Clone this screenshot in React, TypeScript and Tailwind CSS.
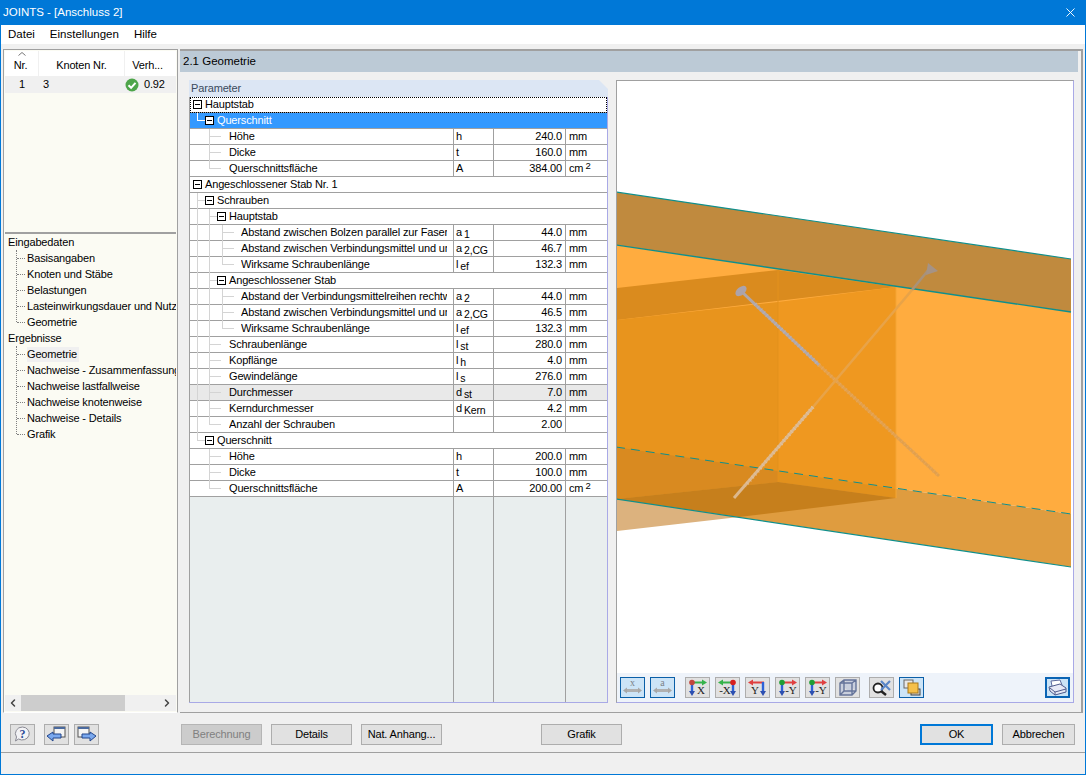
import type { ReactNode } from "react";
import { ChevronLeft, ChevronRight, X } from "lucide-react";

type Row = {
  label: string;
  depth: number;
  // tree guides, as x offsets in the row; the last one stops halfway when `end` is set
  guides: number[];
  end?: boolean;
  sym?: string;
  sub?: string;
  val?: string;
  unit?: string;
  sup?: boolean;
  group?: boolean;
  selected?: boolean;
  focused?: boolean;
  grey?: boolean;
};

const rows: Row[] = [
  { label: "Hauptstab", depth: 0, guides: [], group: true, focused: true },
  { label: "Querschnitt", depth: 1, guides: [7], end: true, group: true, selected: true },
  { label: "Höhe", depth: 2, guides: [19], sym: "h", val: "240.0", unit: "mm" },
  { label: "Dicke", depth: 2, guides: [19], sym: "t", val: "160.0", unit: "mm" },
  { label: "Querschnittsfläche", depth: 2, guides: [19], end: true, sym: "A", val: "384.00", unit: "cm", sup: true },
  { label: "Angeschlossener Stab Nr. 1", depth: 0, guides: [], group: true },
  { label: "Schrauben", depth: 1, guides: [7], group: true },
  { label: "Hauptstab", depth: 2, guides: [7, 19], group: true },
  { label: "Abstand zwischen Bolzen parallel zur Faser", depth: 3, guides: [7, 19, 32], sym: "a", sub: "1", val: "44.0", unit: "mm" },
  { label: "Abstand zwischen Verbindungsmittel und umlaufendem", depth: 3, guides: [7, 19, 32], sym: "a", sub: "2,CG", val: "46.7", unit: "mm" },
  { label: "Wirksame Schraubenlänge", depth: 3, guides: [7, 19, 32], end: true, sym: "l", sub: "ef", val: "132.3", unit: "mm" },
  { label: "Angeschlossener Stab", depth: 2, guides: [7, 19], group: true },
  { label: "Abstand der Verbindungsmittelreihen rechtwinklig", depth: 3, guides: [7, 19, 32], sym: "a", sub: "2", val: "44.0", unit: "mm" },
  { label: "Abstand zwischen Verbindungsmittel und umlaufendem", depth: 3, guides: [7, 19, 32], sym: "a", sub: "2,CG", val: "46.5", unit: "mm" },
  { label: "Wirksame Schraubenlänge", depth: 3, guides: [7, 19, 32], end: true, sym: "l", sub: "ef", val: "132.3", unit: "mm" },
  { label: "Schraubenlänge", depth: 2, guides: [7, 19], sym: "l", sub: "st", val: "280.0", unit: "mm" },
  { label: "Kopflänge", depth: 2, guides: [7, 19], sym: "l", sub: "h", val: "4.0", unit: "mm" },
  { label: "Gewindelänge", depth: 2, guides: [7, 19], sym: "l", sub: "s", val: "276.0", unit: "mm" },
  { label: "Durchmesser", depth: 2, guides: [7, 19], sym: "d", sub: "st", val: "7.0", unit: "mm", grey: true },
  { label: "Kerndurchmesser", depth: 2, guides: [7, 19], sym: "d", sub: "Kern", val: "4.2", unit: "mm" },
  { label: "Anzahl der Schrauben", depth: 2, guides: [7, 19], end: true, sym: "", val: "2.00", unit: "" },
  { label: "Querschnitt", depth: 1, guides: [7], end: true, group: true },
  { label: "Höhe", depth: 2, guides: [19], sym: "h", val: "200.0", unit: "mm" },
  { label: "Dicke", depth: 2, guides: [19], sym: "t", val: "100.0", unit: "mm" },
  { label: "Querschnittsfläche", depth: 2, guides: [19], end: true, sym: "A", val: "200.00", unit: "cm", sup: true },
];

const inputItems = ["Basisangaben", "Knoten und Stäbe", "Belastungen", "Lasteinwirkungsdauer und Nutzungsklasse", "Geometrie"];
const resultItems = ["Geometrie", "Nachweise - Zusammenfassung", "Nachweise lastfallweise", "Nachweise knotenweise", "Nachweise - Details", "Grafik"];

function MinusBox() {
  return (
    <span className="relative z-10 flex h-[9px] w-[9px] shrink-0 items-center justify-center border border-black bg-white">
      <span className="h-px w-[5px] bg-black" />
    </span>
  );
}

function Guides({ row }: { row: Row }) {
  const color = row.selected ? "bg-white" : "bg-[#d4d4d4]";
  const last = row.guides.length - 1;
  const branch = row.guides[last];
  return (
    <>
      {row.guides.map((x, i) => (
        <span
          key={x}
          className={`absolute top-0 w-px ${color} ${row.end && i === last ? "h-[8px]" : "h-4"}`}
          style={{ left: x }}
        />
      ))}
      {last >= 0 && (
        <span
          className={`absolute top-[7px] h-px ${color}`}
          style={{ left: branch, width: row.group ? 8 : 12 }}
        />
      )}
    </>
  );
}

function ParamRow({ row }: { row: Row }) {
  const tone = row.selected ? "bg-[#3399ff] text-white" : row.grey ? "bg-[#e9e9e9]" : "bg-white";
  if (row.group) {
    const boxLeft = [3, 15, 27][row.depth];
    return (
      <div className={`relative flex h-4 items-center border-b border-[#a0a0a0] ${tone} ${row.focused ? "outline-1 -outline-offset-1 outline-dotted outline-black" : ""}`}>
        <Guides row={row} />
        <div className="flex items-center gap-[3px]" style={{ paddingLeft: boxLeft }}>
          <MinusBox />
          <span className="whitespace-nowrap">{row.label}</span>
        </div>
      </div>
    );
  }
  return (
    <div className={`grid h-4 grid-cols-[264px_40px_72px_41px] border-b border-[#a0a0a0] ${tone}`}>
      <div className="relative border-r border-[#a0a0a0] pr-[6px]" style={{ paddingLeft: row.depth === 2 ? 39 : 51 }}>
        <Guides row={row} />
        <div className="overflow-hidden whitespace-nowrap">{row.label}</div>
      </div>
      <div className="border-r border-[#a0a0a0] pl-[2px] whitespace-nowrap">
        {row.sym}
        {row.sub && <span className="relative top-[2px] ml-[2px] text-[10.5px]">{row.sub}</span>}
      </div>
      <div className="border-r border-[#a0a0a0] pr-[3px] text-right">{row.val}</div>
      <div className="pl-[3px] whitespace-nowrap">
        {row.unit}
        {row.sup && <span className="relative -top-[3px] ml-[2px] text-[9.5px]">2</span>}
      </div>
    </div>
  );
}

function NavTree({ title, items, active }: { title: string; items: string[]; active?: string }) {
  return (
    <div>
      <div className="flex h-4 items-center pl-[3px]">{title}</div>
      <div className="relative">
        <span className="absolute top-0 bottom-2 left-[11px] border-l border-dotted border-[#808080]" />
        {items.map((item) => (
          <div key={item} className="relative flex h-4 items-center pl-[22px] whitespace-nowrap">
            <span className="absolute top-[8px] left-[12px] w-[8px] border-t border-dotted border-[#808080]" />
            <span className={item === active ? "bg-[#f0f0f0] pr-[2px]" : ""}>{item}</span>
          </div>
        ))}
      </div>
    </div>
  );
}

function IconBtn({ on, children }: { on?: boolean; children: ReactNode }) {
  return (
    <button className={`flex h-[21px] w-[25px] items-center justify-center border ${on ? "border-[#0a5fa8] bg-[#cce4f7]" : "border-[#adadad] bg-[#e1e1e1]"}`}>
      <svg width="23" height="19" viewBox="0 0 23 19">{children}</svg>
    </button>
  );
}

function Btn({ label, w, state }: { label: string; w: string; state?: "disabled" | "default" }) {
  const look =
    state === "disabled"
      ? "border-[#b5b5b5] bg-[#cccccc] text-[#808080]"
      : state === "default"
        ? "border-2 border-[#0078d7] bg-[#e1e1e1]"
        : "border-[#adadad] bg-[#e1e1e1]";
  return <button className={`flex h-[21px] items-center justify-center border whitespace-nowrap ${look} ${w}`}>{label}</button>;
}

// View button glyph: coloured horizontal axis on top, blue axis going down, view letter beside it
function AxisGlyph({ letter, color, left, blueRight, dot }: { letter: string; color: string; left?: boolean; blueRight?: boolean; dot?: string }) {
  const vx = blueRight ? 17 : 6;
  return (
    <>
      <path d="M5 4.5H18" stroke={color} strokeWidth="2" />
      {left ? <polygon points="2,4.5 7,1.5 7,7.5" fill={color} /> : <polygon points="21,4.5 16,1.5 16,7.5" fill={color} />}
      <path d={`M${vx} 4V14`} stroke="#2c62d8" strokeWidth="2.4" />
      <polygon points={`${vx - 3},13 ${vx + 3},13 ${vx},18`} fill="#2c4fb0" />
      {dot && <circle cx={vx} cy="4.5" r="2.8" fill={dot} />}
      <text x={blueRight ? 9 : 15} y="16" textAnchor="middle" fontFamily="'Liberation Serif', serif" fontSize="11" fill="#222">{letter}</text>
    </>
  );
}

function Bolt({ letter }: { letter: string }) {
  return (
    <>
      <text x="11.5" y="8" textAnchor="middle" fontFamily="'Liberation Serif', serif" fontSize="10" fill="#7b8288">{letter}</text>
      <path d="M5 12.5H18" stroke="#b0b0b0" strokeWidth="3" />
      <polygon points="2,12.5 6,9.5 6,15.5" fill="#a8a8a8" />
      <polygon points="21,12.5 17,9.5 17,15.5" fill="#a8a8a8" />
    </>
  );
}

function Viewport() {
  return (
    <svg className="shrink-0" width="456" height="592" viewBox="617 81 456 592">
      <polygon points="616,192 1071,259 1071,312 616,245" fill="#c08a3e" />
      <polygon points="616,245 1071,312 1071,514 616,447" fill="#ffac3f" />
      <polygon points="616,447 1071,514 1071,567 616,499" fill="#df9c3f" />
      <polygon points="616,499 739,517 616,531" fill="#dcb27e" />
      <polygon points="616,288 778,270 896,287 616,320" fill="#da8b1e" />
      <polygon points="616,320 778,302 778,482 616,499" fill="#e8941d" />
      <polygon points="778,302 896,287 896,498 778,482" fill="#ef9820" />
      <polygon points="616,447 778,471 778,482 616,499" fill="#d98a20" />
      <polygon points="778,471 896,489 896,498 778,482" fill="#e2911d" />
      <polygon points="616,499 778,482 896,498 739,517" fill="#c67f1c" />
      <line x1="896" y1="287" x2="896" y2="498" stroke="#f5a534" />
      <line x1="778" y1="270" x2="778" y2="482" stroke="#e3911d" />
      <line x1="616" y1="192" x2="1071" y2="259" stroke="#0f8f8c" strokeWidth="1.2" />
      <line x1="616" y1="245" x2="1071" y2="312" stroke="#0f8f8c" strokeWidth="1.4" />
      <line x1="616" y1="447" x2="1071" y2="514" stroke="#0f8f8c" strokeWidth="1" strokeDasharray="9 6" />
      <line x1="616" y1="499" x2="1071" y2="567" stroke="#0f8f8c" strokeWidth="1.2" />
      {/* screws: grey where they are in front, tinted where the timber covers them */}
      <line x1="741" y1="291" x2="819" y2="365" stroke="#b0a7aa" strokeWidth="3" />
      <line x1="755" y1="304" x2="819" y2="365" stroke="#b8b0b2" strokeWidth="3.8" strokeDasharray="1 3" />
      <line x1="819" y1="365" x2="939" y2="476" stroke="#e2a04c" strokeWidth="3" />
      <line x1="819" y1="365" x2="939" y2="476" stroke="#e6a65a" strokeWidth="3.8" strokeDasharray="1 3" />
      <ellipse cx="741" cy="291" rx="6.5" ry="4" transform="rotate(-40 741 291)" fill="#aca3ab" />
      <line x1="930" y1="268" x2="912" y2="290" stroke="#a8927a" strokeWidth="2.6" />
      <line x1="912" y1="290" x2="813" y2="407" stroke="#e8a348" strokeWidth="2.6" />
      <line x1="813" y1="407" x2="734" y2="498" stroke="#dcb88e" strokeWidth="3" />
      <line x1="813" y1="407" x2="745" y2="486" stroke="#e0c09c" strokeWidth="3.8" strokeDasharray="1 3" />
      <polygon points="928,263 938,271 926,275" fill="#a59386" />
    </svg>
  );
}

function ChevronUpMark() {
  return (
    <svg className="absolute top-[1px] left-[13px]" width="8" height="4" viewBox="0 0 8 4">
      <path d="M0.5 3.5L4 0.5L7.5 3.5" fill="none" stroke="#777" />
    </svg>
  );
}

export default function App() {
  return (
    <div className="flex h-[775px] w-[1086px] flex-col overflow-hidden border-x border-b border-[#0078d7] bg-[#f0f0f0] font-['Liberation_Sans',sans-serif] text-[11px] leading-[15px] tracking-[-0.15px] text-black">
      <div className="flex h-[25px] shrink-0 items-center justify-between bg-[#0078d7] pr-[7px] pl-[2px] text-[11.5px] tracking-normal text-white">
        <span>JOINTS - [Anschluss 2]</span>
        <X size={15} strokeWidth={1.5} />
      </div>
      <div className="flex h-[19px] shrink-0 items-center gap-[15px] bg-white pl-[7px] text-[11.5px] tracking-normal">
        <span>Datei</span>
        <span>Einstellungen</span>
        <span>Hilfe</span>
      </div>

      <div className="flex min-h-0 flex-1 gap-[2px] pt-[5px] pr-[2px] pl-[2px]">
        {/* left column */}
        <div className="flex h-[664px] w-[175px] shrink-0 flex-col border border-[#a0a0a0] border-b-white bg-[#fbfbf3] p-px">
          <div className="h-[183px] shrink-0 border-b-2 border-[#a0a0a0]">
            <div className="grid h-[25px] grid-cols-[34px_86px_1fr] bg-white text-center">
              <div className="relative border-r border-[#f0f0f0] pt-[7px] pr-[2px]">
                <ChevronUpMark />
                Nr.
              </div>
              <div className="border-r border-[#f0f0f0] pt-[7px]">Knoten Nr.</div>
              <div className="pt-[7px] pr-[6px]">Verh...</div>
            </div>
            <div className="grid h-[17px] grid-cols-[34px_86px_1fr] items-center bg-[#f0f0f0]">
              <div className="pl-[14px]">1</div>
              <div className="pl-[4px]">3</div>
              <div className="flex items-center gap-[5px]">
                <svg width="14" height="14" viewBox="0 0 14 14">
                  <circle cx="7" cy="7" r="6.5" fill="#4ea54a" />
                  <path d="M3.5 7.2l2.6 2.6 4.4-5" fill="none" stroke="#fff" strokeWidth="2" />
                </svg>
                <span>0.92</span>
              </div>
            </div>
          </div>
          <div className="min-h-0 flex-1 overflow-hidden">
            <NavTree title="Eingabedaten" items={inputItems} />
            <NavTree title="Ergebnisse" items={resultItems} active="Geometrie" />
          </div>
          <div className="flex h-[16px] shrink-0 items-center bg-[#f0f0f0] text-[#444]">
            <ChevronLeft size={12} strokeWidth={3} className="mx-[2px]" />
            <div className="h-full w-[104px] bg-[#cdcdcd]" />
            <div className="flex-1" />
            <ChevronRight size={12} strokeWidth={3} className="mx-[3px]" />
          </div>
        </div>

        {/* right column */}
        <div className="flex h-[664px] min-w-0 flex-1 flex-col border-t-2 border-r-2 border-b border-[#a0a0a0]">
          <div className="mr-[3px] flex h-[21px] shrink-0 items-center bg-[#bccad6] pl-[3px] text-[11.5px] tracking-normal">2.1 Geometrie</div>
          <div className="flex min-h-0 flex-1 gap-[8px] pt-[8px] pb-[9px] pl-[9px]">
            {/* parameter table */}
            <div className="flex w-[419px] shrink-0 flex-col">
              <div className="h-[17px] shrink-0 bg-[#dce6f4] pt-px pl-[2px] text-[#3a4a5c] [clip-path:polygon(0_0,calc(100%-9px)_0,100%_9px,100%_100%,0_100%)]">Parameter</div>
              <div className="flex min-h-0 flex-1 flex-col border-r border-b border-r-[#a9a9e6] border-b-[#a9a9e6]">
                <div className="border-l border-[#a0a0a0]">
                  {rows.map((row, i) => (
                    <ParamRow key={i} row={row} />
                  ))}
                </div>
                <div className="grid min-h-0 flex-1 grid-cols-[264px_40px_72px_41px] border-l border-[#a0a0a0] bg-[#e9eeee]">
                  <div className="border-r border-[#a0a0a0]" />
                  <div className="border-r border-[#a0a0a0]" />
                  <div className="border-r border-[#a0a0a0]" />
                  <div />
                </div>
              </div>
            </div>

            {/* 3D view */}
            <div className="flex w-[458px] shrink-0 flex-col border border-[#a0a0a0] border-r-[#a9a9e6] border-b-[#a9a9e6] bg-white">
              <Viewport />
              <div className="flex h-[29px] shrink-0 items-center bg-[#eef3fa] px-[3px]">
                <div className="flex gap-[5px]">
                  <IconBtn on><Bolt letter="x" /></IconBtn>
                  <IconBtn on><Bolt letter="a" /></IconBtn>
                </div>
                <div className="ml-[10px] flex gap-[5px]">
                  <IconBtn><AxisGlyph letter="X" color="#35b34a" dot="#c2453d" /></IconBtn>
                  <IconBtn><AxisGlyph letter="-X" color="#35b34a" left blueRight dot="#d81f1f" /></IconBtn>
                  <IconBtn><AxisGlyph letter="Y" color="#e04040" left blueRight /></IconBtn>
                  <IconBtn><AxisGlyph letter="-Y" color="#e04040" dot="#1f9e35" /></IconBtn>
                  <IconBtn><AxisGlyph letter="-Y" color="#e04040" dot="#1f9e35" /></IconBtn>
                  <IconBtn>
                    <path d="M4 5L8 2H20V13L16 17H4ZM4 5H16V17M16 5L20 2M8 2V13H20M8 13L4 17" fill="#b9c3da" fillOpacity="0.6" stroke="#65749a" strokeWidth="1.4" />
                  </IconBtn>
                </div>
                <div className="ml-[9px] flex gap-[5px]">
                  <IconBtn>
                    <circle cx="8" cy="10" r="4.5" fill="#fff" stroke="#222" strokeWidth="1.8" />
                    <path d="M11 13l5 4" stroke="#222" strokeWidth="2.4" />
                    <path d="M11 3l9 9M20 3l-9 9" stroke="#5a86c8" strokeWidth="2.2" />
                  </IconBtn>
                  <IconBtn on>
                    <rect x="4" y="2" width="9" height="8" fill="#e8e8e8" stroke="#666" />
                    <rect x="11" y="11" width="9" height="6" fill="#cfcfcf" stroke="#444" />
                    <rect x="8" y="5" width="10" height="10" fill="#f5c04a" stroke="#a8781c" />
                  </IconBtn>
                </div>
                <div className="ml-auto">
                  <button className="flex h-[21px] w-[25px] items-center justify-center border-2 border-[#0a64b4] bg-[#cce4f7]">
                    <svg width="21" height="17" viewBox="0 0 21 17">
                      <path d="M5 7L4 2L13 1L15 6" fill="#fff" stroke="#5e6a9c" />
                      <path d="M2 8L13 5L19 9V13L8 16L3 12Z" fill="#e7e9f6" stroke="#4f5a8c" />
                      <path d="M3 9L8 13L19 10M8 13V16" fill="none" stroke="#4f5a8c" />
                    </svg>
                  </button>
                </div>
              </div>
            </div>
          </div>
        </div>
      </div>

      {/* button bar */}
      <div className="flex h-[40px] shrink-0 items-start border-b border-[#a0a0a0] pt-[11px] pr-[10px] pl-[9px]">
        <IconBtn>
          <path d="M11.5 2a7 6.5 0 1 1-4 12l-3 2 1-4a7 6.5 0 0 1 6-10Z" fill="#f2f2f5" stroke="#8a8a94" />
          <text x="11.5" y="13" textAnchor="middle" fontFamily="'Liberation Serif', serif" fontWeight="bold" fontSize="12" fill="#2c4a96">?</text>
        </IconBtn>
        <div className="ml-[9px] flex gap-[5px]">
          <IconBtn>
            <rect x="9" y="2" width="11" height="10" fill="#f4f4f4" stroke="#555" />
            <rect x="9" y="2" width="11" height="2" fill="#4b6a9e" />
            <path d="M2 11L8 7V9H16V13H8V16Z" fill="#7aa8ee" stroke="#23468c" />
          </IconBtn>
          <IconBtn>
            <rect x="3" y="2" width="11" height="10" fill="#f4f4f4" stroke="#555" />
            <rect x="3" y="2" width="11" height="2" fill="#4b6a9e" />
            <path d="M21 11L15 7V9H7V13H15V16Z" fill="#7aa8ee" stroke="#23468c" />
          </IconBtn>
        </div>
        <div className="ml-[82px] flex gap-[9px]">
          <Btn label="Berechnung" w="w-[81px]" state="disabled" />
          <Btn label="Details" w="w-[81px]" />
          <Btn label="Nat. Anhang..." w="w-[81px]" />
        </div>
        <div className="ml-[99px]">
          <Btn label="Grafik" w="w-[81px]" />
        </div>
        <div className="ml-auto flex gap-[9px]">
          <Btn label="OK" w="w-[73px]" state="default" />
          <Btn label="Abbrechen" w="w-[73px]" />
        </div>
      </div>
      <div className="h-[21px] shrink-0 bg-[#f0f0f0]" />
    </div>
  );
}
